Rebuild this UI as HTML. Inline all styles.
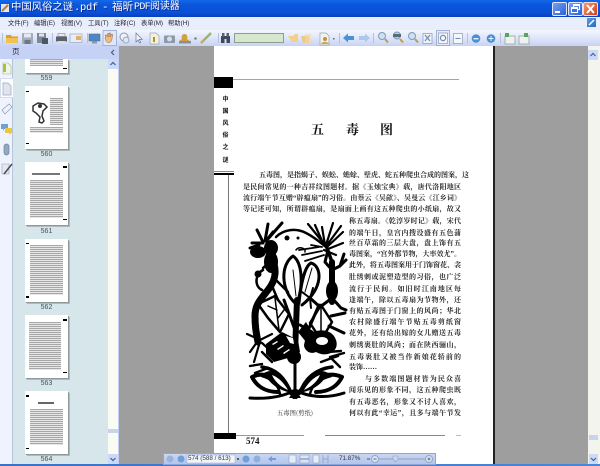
<!DOCTYPE html>
<html lang="zh"><head><meta charset="utf-8"><title>中国风俗之谜.pdf - 福昕PDF阅读器</title>
<style>
html,body{margin:0;padding:0;width:600px;height:466px;overflow:hidden;background:#9e9e9e;font-family:"Liberation Sans","Noto Sans CJK SC",sans-serif}
div,span{position:absolute;box-sizing:border-box}
.t{white-space:nowrap;color:#fff;font-size:11px;line-height:14px;top:1px;text-shadow:1px 1px 0 #0a2a90;font-family:"Liberation Mono","Noto Sans CJK SC",monospace}
.m{top:18px;font-size:6.3px;line-height:11px;color:#223;white-space:nowrap}
.l{font:700 7px/12px "Liberation Serif","Noto Serif CJK SC",serif;color:#2a2a2a;white-space:nowrap;text-align:justify;text-align-last:justify}
.f{left:243px;width:218px}.s{left:349px;width:112px}
.th{left:25px;width:43px;height:63px;background:#fff;box-shadow:1px 1px 0 #8f9a9a,2px 2px 0 #aeb9b9;overflow:hidden}
.tx{background:repeating-linear-gradient(#a8a8a8 0 1px,#e6e6e6 1px 2px)}
.n{left:25px;width:43px;text-align:center;font-size:7px;line-height:9px;color:#44555a;font-family:"Liberation Sans",sans-serif}
.b{background:#000}
.v{left:220px;width:11px;text-align:center;font:bold 6px/9px "Noto Sans CJK SC",sans-serif;color:#111}
</style></head><body>
<!-- title bar -->
<div style="left:0;top:0;width:600px;height:17px;background:linear-gradient(#1468e8 0,#0a55dd 30%,#0a50d4 75%,#0840c0 100%)"></div>
<div style="left:1px;top:4px;width:8px;height:8px;background:#e6e6ee"></div>
<svg style="position:absolute;left:1px;top:4px" width="9" height="9"><path d="M1 7L7 1" stroke="#c87b20" stroke-width="2"/></svg>
<span class="t" style="left:11px;letter-spacing:-.05px;font-size:10.4px">中国风俗之谜</span>
<span class="t" style="left:74px;font-size:10.5px;letter-spacing:-.3px">.pdf</span>
<span class="t" style="left:102px;font-size:11px">-</span>
<span class="t" style="left:112px;font-size:10.6px">福昕</span>
<span class="t" style="left:134px;font-size:10px;letter-spacing:-.6px">PDF</span>
<span class="t" style="left:150px;font-size:10px;letter-spacing:-.1px">阅读器</span>
<div style="left:552px;top:2px;width:15px;height:14px;border-radius:2px;background:linear-gradient(135deg,#7aa2f0,#2c5fd8);border:1px solid #dfe8ff"></div>
<div style="left:555px;top:11px;width:5px;height:2px;background:#fff"></div>
<div style="left:568px;top:2px;width:15px;height:14px;border-radius:2px;background:linear-gradient(135deg,#7aa2f0,#2c5fd8);border:1px solid #dfe8ff"></div>
<div style="left:573px;top:4px;width:7px;height:6px;border:1px solid #fff;border-top-width:2px"></div>
<div style="left:571px;top:7px;width:7px;height:6px;border:1px solid #fff;border-top-width:2px;background:#3f6fe0"></div>
<div style="left:583px;top:2px;width:15px;height:14px;border-radius:2px;background:linear-gradient(135deg,#f09a78,#d03c14);border:1px solid #f4dcd4"></div>
<svg style="position:absolute;left:583px;top:2px" width="15" height="14"><path d="M4 3L11 11M11 3L4 11" stroke="#fff" stroke-width="2"/></svg>
<!-- menu -->
<div style="left:0;top:17px;width:600px;height:13px;background:#e9eefc"></div>
<span class="m" style="left:8px">文件(F)</span><span class="m" style="left:34px">编辑(E)</span><span class="m" style="left:61px">视图(V)</span><span class="m" style="left:88px">工具(T)</span><span class="m" style="left:114px">注释(C)</span><span class="m" style="left:141px">表单(M)</span><span class="m" style="left:168px">帮助(H)</span>
<div style="left:587px;top:18px;width:9px;height:9px;background:linear-gradient(135deg,#5c9ae0,#2a6ac0)"></div>
<svg style="position:absolute;left:587px;top:18px" width="9" height="9"><path d="M2 7L7 2" stroke="#fff" stroke-width="1.4"/></svg>
<!-- toolbar -->
<div style="left:0;top:30px;width:600px;height:16px;background:linear-gradient(#f3f6ff,#dfe6fa 50%,#c6d3f4)"></div>
<svg style="position:absolute;left:0;top:30px;filter:blur(.3px)" width="600" height="16" viewBox="0 30 600 16">
<g stroke="#b6c0dc" stroke-width="1"><path d="M2.500 33V43M52.500 33V43M87.500 33V43M218.500 33V43M339.500 33V43M373.500 33V43M467.500 33V43M500.500 33V43"/></g>
<path d="M6 35h5l1 1.500h6V43H6z" fill="#e0a030"/><path d="M6 38h12v5H6z" fill="#f4c050"/>
<rect x="22" y="33" width="11" height="11" rx="1" fill="#a2abb8"/><rect x="24" y="33.500" width="7" height="4" fill="#e4e8f0"/><rect x="24.500" y="40" width="6" height="4" fill="#6d7684"/>
<rect x="37" y="33" width="9" height="10" fill="#7d8796"/><rect x="39" y="33.500" width="5" height="3" fill="#dfe3ea"/><rect x="42" y="38" width="6" height="6" fill="#4d5763"/>
<rect x="58" y="33.500" width="7" height="3" fill="#e8e8ec" stroke="#777" stroke-width=".5"/><rect x="56" y="36.500" width="11" height="5" fill="#59616d"/><rect x="57.500" y="41" width="8" height="2.500" fill="#dcdcdc"/>
<rect x="70" y="34" width="12" height="8.500" fill="#e6edf8" stroke="#9fb0c8" stroke-width=".8"/><rect x="76" y="36" width="5" height="4" fill="#e2b060"/>
<rect x="89" y="34" width="11" height="7" fill="#4c86c4" stroke="#607088" stroke-width=".6"/><rect x="92" y="41" width="5" height="2.500" fill="#8c98a8"/>
<rect x="103" y="30.500" width="13.500" height="15" fill="#dfe8fb" stroke="#93a6d0" stroke-width=".8"/>
<path d="M106 38l-1-3 1.500 0 1 2V33.500h1.500V37V33h1.500v4l1-3 1.300.5-.8 4c0 3-1.500 4-3.500 4-2.500 0-2.500-2-3.500-4.500z" fill="#edbb80" stroke="#9a6a30" stroke-width=".5"/>
<circle cx="124" cy="37" r="4" fill="#eef2fa" stroke="#8b98ad"/><circle cx="126" cy="40" r="3" fill="#dfe6f3" stroke="#8b98ad" stroke-width=".8"/>
<path d="M136 33v9l2-2 1.500 3 1.200-.6-1.500-3h3z" fill="#f4f6fb" stroke="#6c7a92" stroke-width=".7"/>
<path d="M150 33h6l3 3v8h-9z" fill="#f3f0dc" stroke="#9aa4b4" stroke-width=".7"/><rect x="153" y="37" width="2" height="5" fill="#b09030"/>
<rect x="164" y="35.500" width="11" height="7.500" rx="1" fill="#8d99a8"/><circle cx="169.500" cy="39" r="2.500" fill="#d6dee8"/>
<path d="M179 43c0-3 2-3 3-4-1-2 0-5 2.500-5s3.500 3 2.500 5c1 1 3 1 3 4z" fill="#cfa040"/><rect x="179" y="41" width="12" height="2.500" fill="#8a8f98"/>
<rect x="194.500" y="37.500" width="2" height="2" fill="#666"/>
<path d="M201 43l10-10" stroke="#9db070" stroke-width="2.400"/><path d="M201 43l3-3" stroke="#d0a868" stroke-width="2.400"/>
<rect x="221" y="36" width="3.500" height="7" fill="#3d4858"/><rect x="226.500" y="36" width="3.500" height="7" fill="#3d4858"/><rect x="222" y="33" width="2.500" height="4" fill="#566074"/><rect x="226.500" y="33" width="2.500" height="4" fill="#566074"/><rect x="224" y="36" width="3" height="3" fill="#3d4858"/>
<rect x="234.500" y="33.500" width="49" height="9" fill="#d7e7cc" stroke="#8e9c94"/>
<path d="M288 36h5l2-2h3v8h-6z" fill="#f2d08a"/>
<path d="M301 36h8v7h-6z" fill="#ecc88a"/><path d="M305 34h6v9h-6z" fill="#f0d8a8" opacity=".6"/>
<path d="M320 33h6l3 3v9h-9z" fill="#f3f3ee" stroke="#96a2b4" stroke-width=".7"/><circle cx="325" cy="39" r="2" fill="#c09040"/><path d="M321 44c.5-3 7-3 8 0z" fill="#d0a850"/>
<rect x="333" y="38" width="1.500" height="1.500" fill="#666"/>
<path d="M343 38l5-4.500V36h6v4h-6v2.500z" fill="#4a92d4"/>
<path d="M370 38l-5-4.500V36h-6v4h6v2.500z" fill="#a9c8ec"/>
<g fill="#cfe0f0" stroke="#7f9cb8" stroke-width="1"><circle cx="382" cy="36" r="3.500"/><circle cx="397" cy="35.500" r="3.500" fill="#b8cce0"/><circle cx="412" cy="36" r="3.500"/></g>
<g stroke="#c89a48" stroke-width="2"><path d="M385 39l3 3.500M400 39l3 3.500M415 39l3 3.500"/></g>
<rect x="393" y="34" width="8" height="3" fill="#5a6a7a"/>
<rect x="423" y="33.500" width="9" height="10" fill="#eef2f8" stroke="#8c9ab0" stroke-width=".7"/><path d="M425 35l5 6M430 35l-5 6" stroke="#6f8db0" stroke-width="1.200"/>
<rect x="436.500" y="30.500" width="13" height="15" fill="#e2e9fb" stroke="#93a6d0" stroke-width=".8"/><rect x="438.500" y="33" width="9" height="10.500" fill="#f4f6fc" stroke="#8c9ab0" stroke-width=".7"/><circle cx="443" cy="38" r="2.600" fill="none" stroke="#6f8db0" stroke-width="1.200"/>
<rect x="453.500" y="33.500" width="9" height="10" fill="#f3f6fb" stroke="#8c9ab0" stroke-width=".7"/><path d="M455.500 38.500h5" stroke="#6f8db0"/>
<circle cx="476" cy="38.500" r="4.300" fill="#4a8fd0"/><rect x="473.500" y="38" width="5" height="1.400" fill="#e8f2fc"/>
<circle cx="491" cy="38.500" r="4.300" fill="#4a8fd0"/><path d="M488.500 38.500h5M491 36v5" stroke="#e8f2fc"/>
<rect x="505" y="36" width="10" height="8" fill="#eef2ee" stroke="#8a9a90" stroke-width=".7"/><path d="M505 33h4v4h-4z" fill="#56a858"/>
<rect x="519" y="36" width="10" height="8" fill="#eef2ee" stroke="#8a9a90" stroke-width=".7"/><path d="M524 33h4v4h-4z" fill="#56a858"/>
</svg>
<!-- left panel -->
<div style="left:0;top:46px;width:119px;height:13px;background:#c6d2f5"></div>
<span style="left:12px;top:46px;font-size:7.5px;line-height:12px;color:#223">页</span>
<svg style="position:absolute;left:110px;top:49px" width="6" height="7"><path d="M4 1L1.500 3.500L4 6" fill="none" stroke="#4a5a80" stroke-width="1.200"/></svg>
<div style="left:0;top:59px;width:13px;height:405px;background:#eef3fd;border-right:1px solid #b5c5e0"></div>
<div style="left:0;top:78px;width:13px;height:20px;background:#fafcff;border:1px solid #d5dcec;border-right:0"></div>
<div style="left:13px;top:59px;width:95px;height:405px;background:#d6e6ea"></div>
<div style="left:108px;top:59px;width:10px;height:405px;background:#fbfbf6"></div>
<div style="left:118px;top:46px;width:1px;height:418px;background:#c2cff0"></div>
<div style="left:108px;top:59px;width:10px;height:10px;background:#cbd9f6"></div>
<svg style="position:absolute;left:108px;top:59px" width="10" height="10"><path d="M2.500 6L5 3.500L7.500 6" fill="none" stroke="#3f5fa0" stroke-width="1.200"/></svg>
<div style="left:108px;top:429px;width:10px;height:4px;background:#c8d4ee"></div>
<div style="left:108px;top:454px;width:10px;height:10px;background:#cbd9f6"></div>
<svg style="position:absolute;left:108px;top:454px" width="10" height="10"><path d="M2.500 4L5 6.500L7.500 4" fill="none" stroke="#3f5fa0" stroke-width="1.200"/></svg>
<!-- tab icons -->
<svg style="position:absolute;left:0;top:59px;filter:blur(.3px)" width="13" height="120" viewBox="0 59 13 120">
<path d="M3 63h5l3 3v8H3z" fill="#f2f4e6" stroke="#a8b090" stroke-width=".6"/><rect x="3" y="64" width="3" height="8" fill="#a4c43c"/>
<path d="M3 83h5l3 3v9H3z" fill="#dfe4ee" stroke="#9ca8bc" stroke-width=".7"/>
<path d="M2 110l7-6 3 3-7 7z" fill="#eef2fa" stroke="#8e9cb4" stroke-width=".7"/>
<path d="M1 124h7v5H4l-1 2v-2H1z" fill="#6ea0d8"/><path d="M5 128h7v5h-1l-1 2-1-2H5z" fill="#e8c840"/>
<rect x="4" y="144" width="5" height="11" rx="2.500" fill="#92a8c4" stroke="#6c829e" stroke-width=".7"/>
<path d="M2 164h7v10H2z" fill="#e6e8ee" stroke="#9aa2b2" stroke-width=".6"/><path d="M4 174l8-10" stroke="#444c58" stroke-width="1.500"/>
</svg>
<!-- thumbnails -->
<div class="th" style="top:59px;height:14px"><div class="tx" style="left:5px;top:0;width:33px;height:7px"></div><div class="b" style="left:38px;top:9px;width:4px;height:1px"></div></div>
<div class="n" style="top:74px">559</div>
<div class="th" style="top:86px"><div class="b" style="left:1px;top:5px;width:3px;height:1px"></div><div class="tx" style="left:25px;top:12px;width:13px;height:27px"></div><div class="tx" style="left:5px;top:41px;width:33px;height:6px"></div><div class="b" style="left:1px;top:57px;width:3px;height:1px"></div>
<svg style="position:absolute;left:6px;top:14px" width="18" height="26"><path d="M2 6l5-3 6 1 3 3-4 4-1 5 2 5-2 2-3-1 1-5-4-4-3-2z" fill="none" stroke="#333" stroke-width="1.500"/><circle cx="9" cy="6" r="2" fill="#333"/></svg></div>
<div class="n" style="top:150px">560</div>
<div class="th" style="top:162px"><div class="b" style="left:38px;top:4px;width:4px;height:2px"></div><div style="left:7px;top:11px;width:28px;height:2px;background:#777"></div><div class="tx" style="left:5px;top:18px;width:33px;height:38px"></div><div class="b" style="left:38px;top:57px;width:4px;height:1px"></div></div>
<div class="n" style="top:227px">561</div>
<div class="th" style="top:239px"><div class="b" style="left:1px;top:4px;width:3px;height:1px"></div><div class="tx" style="left:5px;top:6px;width:33px;height:50px"></div><div class="b" style="left:1px;top:57px;width:3px;height:2px"></div></div>
<div class="n" style="top:303px">562</div>
<div class="th" style="top:315px"><div class="b" style="left:38px;top:4px;width:4px;height:2px"></div><div class="tx" style="left:4px;top:7px;width:32px;height:48px"></div><div class="b" style="left:38px;top:57px;width:4px;height:1px"></div></div>
<div class="n" style="top:379px">563</div>
<div class="th" style="top:391px"><div class="b" style="left:1px;top:4px;width:3px;height:2px"></div><div style="left:13px;top:11px;width:16px;height:2px;background:#666"></div><div class="tx" style="left:5px;top:18px;width:33px;height:36px"></div><div class="b" style="left:1px;top:57px;width:3px;height:1px"></div></div>
<div class="n" style="top:455px">564</div>
<!-- main gray -->
<div style="left:119px;top:46px;width:469px;height:418px;background:#9e9e9e"></div>
<div style="left:588px;top:46px;width:12px;height:418px;background:#f4f4ee"></div>
<div style="left:588px;top:50px;width:10px;height:10px;background:#cbd9f6"></div>
<svg style="position:absolute;left:588px;top:50px" width="10" height="10"><path d="M2.500 6L5 3.500L7.500 6" fill="none" stroke="#3f5fa0" stroke-width="1.200"/></svg>
<div style="left:589px;top:435px;width:9px;height:5px;background:#c8d4ee"></div>
<div style="left:589px;top:454px;width:9px;height:10px;background:#cbd9f6"></div>
<svg style="position:absolute;left:589px;top:454px" width="9" height="10"><path d="M2 4L4.500 6.500L7 4" fill="none" stroke="#3f5fa0" stroke-width="1.200"/></svg>
<!-- page -->
<div style="left:214px;top:46px;width:280px;height:418px;background:#fff"></div>
<div style="left:493px;top:46px;width:2px;height:418px;background:#222"></div>
<div style="left:233px;top:79px;width:226px;height:1px;background:#a4a4a4"></div>
<div class="b" style="left:214px;top:77px;width:19px;height:11px"></div>
<div class="v" style="top:94px">中</div><div class="v" style="top:106px">国</div><div class="v" style="top:118px">风</div><div class="v" style="top:130px">俗</div><div class="v" style="top:142px">之</div><div class="v" style="top:155px">谜</div>
<div style="left:214px;top:171px;width:20px;height:1px;background:#888"></div>
<div class="b" style="left:214px;top:173px;width:20px;height:2px"></div>
<div style="left:228px;top:175px;width:1px;height:259px;background:#777"></div>
<div class="b" style="left:214px;top:433px;width:22px;height:6px"></div>
<div style="left:236px;top:435px;width:68px;height:1px;background:#999"></div>
<div style="left:325px;top:435px;width:120px;height:1px;background:#888"></div>
<div style="left:456px;top:435px;width:5px;height:1px;background:#bbb"></div>
<span style="left:246px;top:436px;font:bold 9px/10px 'Liberation Serif',serif;color:#111">574</span>
<span style="left:311px;top:120px;font:bold 13px/18px 'Noto Serif CJK SC',serif;color:#111">五</span>
<span style="left:346px;top:120px;font:bold 13px/18px 'Noto Serif CJK SC',serif;color:#111">毒</span>
<span style="left:380px;top:120px;font:bold 13px/18px 'Noto Serif CJK SC',serif;color:#111">图</span>
<div class="l" style="left:259px;width:202px;top:169px">五毒图，是指蝎子、蜈蚣、蟾蜍、壁虎、蛇五种爬虫合成的图案，这</div>
<div class="l f" style="top:181px">是民间常见的一种吉祥纹图题材。据《玉烛宝典》载，唐代洛阳地区</div>
<div class="l f" style="top:192px">流行端午节互赠“辟瘟扇”的习俗。由蔡云《吴歈》、吴曼云《江乡词》</div>
<div class="l f" style="top:203px">等记述可知，所谓辟瘟扇，是扇面上画有这五种爬虫的小纸扇，故又</div>
<div class="l s" style="top:215px">称五毒扇。《乾淳岁时记》载，宋代</div>
<div class="l s" style="top:227px">的端午日，皇宫内搜设盛有五色蒲</div>
<div class="l s" style="top:237px">丝百草霜的三层大盘，盘上饰有五</div>
<div class="l s" style="top:248px">毒图案，“宫外都节物，大率效尤”。</div>
<div class="l s" style="top:259px">此外，将五毒图案用于门饰窗花、衾</div>
<div class="l s" style="top:271px">肚绣刺或泥塑造型的习俗，也广泛</div>
<div class="l s" style="top:283px">流行于民间。如旧时江南地区每</div>
<div class="l s" style="top:294px">逢端午，除以五毒扇为节物外，还</div>
<div class="l s" style="top:305px">有贴五毒图于门窗上的风尚；华北</div>
<div class="l s" style="top:316px">农村除盛行端午节贴五毒剪纸窗</div>
<div class="l s" style="top:327px">花外，还有给出嫁的女儿赠送五毒</div>
<div class="l s" style="top:339px">刺绣裹肚的风尚；而在陕西骊山，</div>
<div class="l s" style="top:351px">五毒裹肚又被当作新娘花轿前的</div>
<div class="l" style="left:349px;top:361px;text-align-last:left">装饰……</div>
<div class="l" style="left:365px;width:96px;top:373px">与多数端图题材皆为民众喜</div>
<div class="l s" style="top:384px">闻乐见的形象不同，这五种爬虫既</div>
<div class="l s" style="top:396px">有五毒恶名，形象又不讨人喜欢，</div>
<div class="l s" style="top:407px">何以有此“幸运”，且多与端午节发</div>
<span style="left:277px;top:408px;font:6.300px/10px 'Noto Serif CJK SC',serif;color:#333;white-space:nowrap">五毒图(剪纸)</span>
<!-- papercut -->
<svg style="position:absolute;left:245px;top:218px" width="105" height="182" viewBox="245 218 105 182">
<g fill="none" stroke="#000" stroke-linecap="round" stroke-linejoin="round">
<!-- top arc and left spikes -->
<path d="M276 237C284 229 296 228 306 233C314 237 320 242 326 247" stroke-width="2.500"/>
<path d="M263 243L252 243M263 242L257 230M265 241L268 224M266 241L273 232M267 240L282 223M259 245L250 248" stroke-width="3"/>
<!-- right spike crown -->
<path d="M327 247L343 232M327 245L341 226M326 245L333 223M325 245L322 227M323 243L315 225M321 240L308 224M328 249L343 243M324 250L336 255" stroke-width="2.200"/>
<path d="M299 250L319 247M302 255L322 251M305 261L324 255M311 245L322 247" stroke-width="1.800"/>
<path d="M327 248L332 262" stroke-width="3.500"/>
<path d="M296 250C299 246 306 248 305 252" stroke-width="1.500"/>
<!-- two central loops -->
<path d="M295 303C281 290 280 265 293 256C302 262 304 285 297 303" stroke-width="3"/>
<path d="M299 303C301 283 305 266 311 263C322 266 324 288 302 305" stroke-width="3"/>
<path d="M293 270L296 296M312 268L305 292" stroke-width="1"/>
<path d="M297 300L295 352" stroke-width="6"/>
<!-- left lizard -->
<path d="M270 256C278 268 276 280 268 290C260 300 255 305 255 316C255 326 256 332 258 342" stroke-width="7"/>
<path d="M263 270C255 274 254 286 262 290M263 268L270 262M274 278L288 292M272 286L278 300" stroke-width="2.500"/>
<path d="M256 338L247 334M257 342L250 352M259 345L254 362M262 343L272 352M260 340L272 334" stroke-width="2.200"/>
<!-- right lizard -->
<path d="M332 262L332 302" stroke-width="6"/>
<path d="M332 270L340 266L344 254M340 266L346 260M332 270L325 262L328 250M332 298L320 307L310 298M332 298L341 308L346 310" stroke-width="3"/>
<path d="M310 298L302 292M310 298L303 304M310 298L313 288M310 298L311 308" stroke-width="2"/>
<!-- mid leaves -->
<path d="M258 304L275 296L289 314L280 332L268 318z" stroke-width="2.500"/>
<path d="M275 298L279 330M268 306L277 310M284 310L278 318" stroke-width="1.500"/>
<path d="M321 305L332 322L321 340L310 323z" stroke-width="2.500"/>
<path d="M321 308L321 336" stroke-width="1.500"/>
<path d="M284 300L295 330M306 335L319 305" stroke-width="3"/>
<path d="M331 316L345 313M329 326L344 333M300 325L312 332" stroke-width="3"/>
<!-- roots / tendrils -->
<path d="M327 352L341 351M330 357L344 353M331 358L340 367M321 362L332 358L338 356" stroke-width="2.400"/>
<path d="M262 364L250 366M268 368L255 373M271 350L282 357M262 352L272 362" stroke-width="2.400"/>
<!-- lotus -->
<path d="M294 397C284 380 266 370 252 377C256 385 264 392 278 392" stroke-width="4"/>
<path d="M296 397C306 380 326 370 342 377C338 385 330 392 316 392" stroke-width="4"/>
<path d="M250 398C266 399 283 397 295 390C308 397 326 399 344 393" stroke-width="3"/>
<path d="M290 393C286 378 276 369 262 367M300 393C305 378 316 369 332 367" stroke-width="3.500"/>
<path d="M280 394C278 384 272 379 262 376M310 394C312 384 320 379 331 376" stroke-width="2.500"/>
<path d="M295 360L295 394" stroke-width="3"/>
</g>
<g fill="#000">
<ellipse cx="258" cy="252" rx="8" ry="6"/><ellipse cx="271" cy="248" rx="7" ry="8"/><ellipse cx="271" cy="262" rx="7" ry="11"/>
<circle cx="258" cy="274" r="3.500"/><circle cx="287" cy="238" r="2.500"/><circle cx="298" cy="238" r="1.500"/>
<ellipse cx="332" cy="291" rx="6" ry="10"/>
<!-- bee body -->
<path d="M266 344L282 332L298 340L300 352L288 358L274 362L266 354z"/>
<circle cx="294" cy="357" r="7"/>
<!-- toad -->
<path d="M306 336C316 328 332 328 336 340C340 352 326 358 316 352C310 355 304 350 304 345z"/>
<path d="M298 332L306 322L312 332L306 342z"/>
<path d="M264 373C274 367 286 375 293 393C280 391 270 385 264 373z"/>
<path d="M328 373C318 367 306 375 298 393C312 391 322 385 328 373z"/>
<path d="M295 389L289 398H301z"/>
</g>
<g fill="#fff">
<ellipse cx="322" cy="341" rx="6" ry="4"/><path d="M272 344l5-3 1 1-5 3zM277 349l6-4 1 1-6 4zM283 353l6-4 1 1-6 4zM286 336l7 2 1 6-4-1z"/>
<path d="M272 375c6 2 12 8 16 15-7-3-13-8-16-15zM320 375c-6 2-12 8-16 15 7-3 13-8 16-15z"/>
</g>
</svg>
<!-- bottom strip -->
<div style="left:0;top:464px;width:600px;height:2px;background:linear-gradient(90deg,#3a72c8,#4a86d8)"></div>
<!-- floating nav bar -->
<div style="left:163px;top:453px;width:273px;height:12px;background:linear-gradient(#c9d6f2,#b3c5ea);border:1px solid #8fa6d4"></div>
<svg style="position:absolute;left:163px;top:453px" width="273" height="12" viewBox="163 453 273 12">
<circle cx="170" cy="459" r="3.500" fill="#9ab4d8"/><circle cx="181" cy="459" r="3.500" fill="#6f9fd8"/>
<rect x="187" y="455" width="48" height="8" fill="#f2f4fa" stroke="#9aaad0" stroke-width=".5"/>
<rect x="237" y="458" width="2" height="2" fill="#556"/>
<circle cx="246" cy="459" r="3.500" fill="#6f9fd8"/><circle cx="257" cy="459" r="3.500" fill="#8db0dc"/>
<path d="M268 459l4-3v2h4v2h-4v2z" fill="#6f9fd8"/><path d="M285 459l-4-3v2h-4v2h4v2z" fill="#bcd0ee"/>
<rect x="289" y="455" width="7" height="8" fill="#e6ecf8" stroke="#8ea0c2" stroke-width=".6"/>
<rect x="300" y="455" width="9" height="8" fill="#dbe4f6" stroke="#8ea0c2" stroke-width=".6"/><path d="M300 459h9" stroke="#6f84a8"/>
<rect x="313" y="455" width="6" height="8" fill="#e6ecf8" stroke="#8ea0c2" stroke-width=".6"/>
<path d="M323 455v8M328 455v8M323 459h5" stroke="#8ea0c2" stroke-width=".8" fill="none"/>
<rect x="367" y="458.500" width="3" height="1" fill="#556"/>
<circle cx="375" cy="459" r="3.500" fill="#dbe5f6" stroke="#8ea8cc"/><path d="M373.500 459h3" stroke="#667"/>
<path d="M379 459h46" stroke="#8ea0c2"/>
<path d="M393 456h5v3l-2.500 3-2.500-3z" fill="#cad8ee" stroke="#8ea0c2" stroke-width=".6"/>
<circle cx="429" cy="459" r="3.500" fill="#dbe5f6" stroke="#8ea8cc"/><path d="M427.500 459h3M429 457.500v3" stroke="#667"/>
</svg>
<span style="left:188px;top:454px;font:6.300px/10px 'Liberation Sans',sans-serif;color:#334;white-space:nowrap">574 (588 / 613)</span>
<span style="left:339px;top:454px;font:6.300px/10px 'Liberation Sans',sans-serif;color:#334;white-space:nowrap">71.87%</span>
</body></html>
